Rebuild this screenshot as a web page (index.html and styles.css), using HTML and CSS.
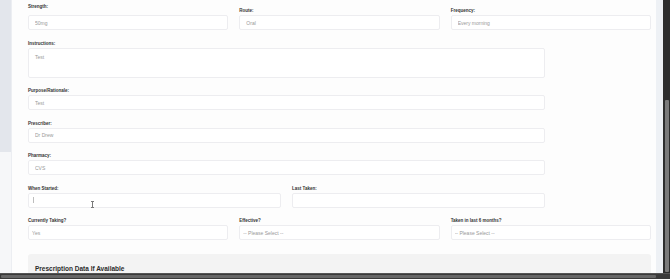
FILE: index.html
```html
<!DOCTYPE html>
<html lang="en">
  <head>
    <meta charset="UTF-8" />
    <meta name="viewport" content="width=device-width, initial-scale=1" />
    <title>Medication</title>
    <link rel="stylesheet" href="styles.css">
  </head>
  <body>
    <div class="screen">
      <div class="sidebar"><div class="sidebar-top"></div></div>
      <div class="panel">
        <div class="grid-3">
          <div class="field">
            <label class="label label-raised">Strength:</label>
            <input class="input" type="text" value="50mg" />
          </div>
          <div class="field">
            <label class="label">Route:</label>
            <input class="input" type="text" value="Oral" />
          </div>
          <div class="field">
            <label class="label">Frequency:</label>
            <input class="input" type="text" value="Every morning" />
          </div>
        </div>

        <div class="field wide">
          <label class="label">Instructions:</label>
          <textarea class="input textarea">Test</textarea>
        </div>
        <div class="field wide">
          <label class="label">Purpose/Rationale:</label>
          <input class="input" type="text" value="Test" />
        </div>
        <div class="field wide">
          <label class="label">Prescriber:</label>
          <input class="input" type="text" value="Dr Drew" />
        </div>
        <div class="field wide">
          <label class="label">Pharmacy:</label>
          <input class="input" type="text" value="CVS" />
        </div>

        <div class="grid-2 wide">
          <div class="field">
            <label class="label">When Started:</label>
            <div class="focus-box">
              <input class="input" type="text" value="" />
              <span class="caret"></span>
              <svg class="ibeam" width="3" height="7" viewBox="0 0 3 7">
                <path d="M0 0.5h3M1.5 0.5v6M0 6.5h3" stroke="#7a7a7a" stroke-width="1" fill="none" />
              </svg>
            </div>
          </div>
          <div class="field">
            <label class="label">Last Taken:</label>
            <input class="input" type="text" value="" />
          </div>
        </div>

        <div class="grid-3">
          <div class="field">
            <label class="label">Currently Taking?</label>
            <select class="input select"><option>Yes</option></select>
          </div>
          <div class="field">
            <label class="label">Effective?</label>
            <select class="input select"><option>-- Please Select --</option></select>
          </div>
          <div class="field">
            <label class="label">Taken in last 6 months?</label>
            <select class="input select"><option>-- Please Select --</option></select>
          </div>
        </div>

        <div class="rx-box">
          <h2 class="rx-title">Prescription Data If Available</h2>
        </div>
      </div>
      <div class="rail"></div>
      <div class="vscroll"><div class="vthumb"></div></div>
    </div>
    <div class="hscroll"><div class="hthumb"></div></div>
  </body>
</html>
```

FILE: styles.css
```css
body {
  margin: 0;
  width: 670px;
  height: 279px;
  overflow: hidden;
  background: #f6f7f9;
  font-family: "Liberation Sans", Arial, sans-serif;
  display: grid;
  grid-template-rows: 273px 6px;
}
.screen {
  display: flex;
  overflow: hidden;
}
.sidebar {
  width: 11px;
  flex: none;
}
.sidebar-top {
  height: 152px;
  background: #e3e6ec;
}
.panel {
  flex: 1;
  background: #fdfdfd;
  border-left: 1px solid #eceef2;
  padding: 4.3px 5px 0 16px;
  overflow: hidden;
}
.rail {
  width: 7px;
  flex: none;
  background: #eef1f5;
}
.vscroll {
  width: 7px;
  flex: none;
  background: #2e2e2e;
  padding: 100px 1px 0 2px;
  box-sizing: border-box;
}
.vthumb {
  height: 172px;
  background: #7b7b7b;
  border-radius: 1px;
}
.hscroll {
  background: #3a3a3a;
  border-top: 1px solid #555;
  padding: 1px 14px 0 1px;
}
.hthumb {
  height: 3px;
  background: #666;
  border-radius: 1px;
}
.grid-3 {
  display: grid;
  grid-template-columns: repeat(3, 1fr);
  column-gap: 11px;
  align-items: end;
}
.grid-2 {
  display: grid;
  grid-template-columns: 1fr 1fr;
  column-gap: 11px;
}
.wide {
  width: 517px;
}
.field {
  margin-bottom: 10.5px;
}
.label {
  display: block;
  font-size: 4.5px;
  line-height: 5px;
  font-weight: 600;
  color: #333;
  margin-bottom: 2px;
}
.label-raised {
  margin-bottom: 6px;
}
.input {
  display: block;
  width: 100%;
  height: 15px;
  box-sizing: border-box;
  margin: 0;
  padding: 0 6px;
  border: 1px solid #ededf0;
  border-radius: 2px;
  background: #fff;
  font-family: inherit;
  font-size: 5px;
  color: #999;
  outline: none;
}
.textarea {
  height: 30px;
  padding: 5px 6px;
  resize: none;
  line-height: 6px;
}
.select {
  appearance: none;
  -webkit-appearance: none;
  padding: 0 3px;
}
.focus-box {
  position: relative;
}
.caret {
  position: absolute;
  left: 5px;
  top: 4px;
  width: 1px;
  height: 6.5px;
  background: #bdbdbd;
}
.ibeam {
  position: absolute;
  left: 62.5px;
  top: 8.5px;
}
.rx-box {
  margin-top: 3.5px;
  background: #f3f3f3;
  border-radius: 3px;
  padding: 11px 7px;
}
.rx-title {
  margin: 0;
  font-size: 6.5px;
  line-height: 8px;
  font-weight: 700;
  color: #2b2b2b;
}
```
